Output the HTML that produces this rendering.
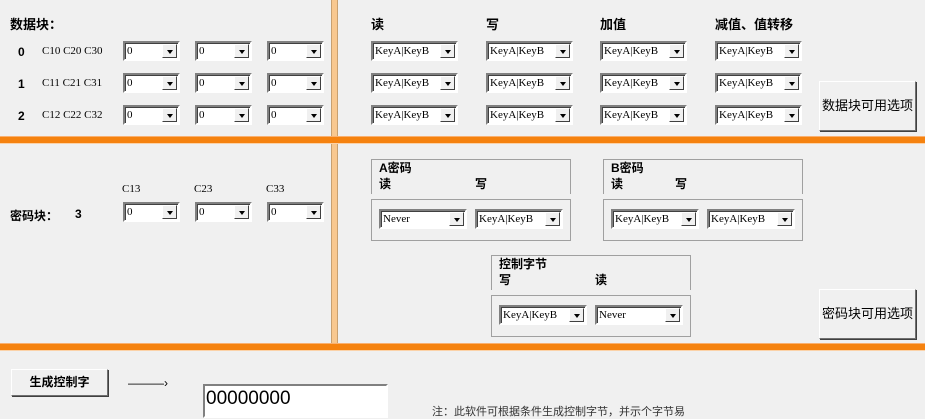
<!DOCTYPE html><html><head><meta charset="utf-8"><style>
body{margin:0;width:925px;height:409px;background:#f0f0f0;position:relative;overflow:hidden;font-family:"Liberation Sans","Noto Sans CJK SC",sans-serif;font-size:12px;color:#000}
.a{position:absolute;white-space:nowrap}
.b{font-weight:bold}
.s{position:absolute;height:16px;background:#fff;border:2px solid;border-color:#808080 #fff #fff #808080;box-shadow:inset 1px 1px 0 #404040;font-family:"Liberation Serif",serif;font-size:11px;line-height:16px;padding-left:2px;box-sizing:content-box}
.s i{position:absolute;right:1px;top:1px;width:15px;height:14px;background:#f0f0f0;border:1px solid;border-color:#fff #404040 #404040 #fff;box-sizing:border-box}
.s i:after{content:"";position:absolute;left:4px;top:5px;border:3px solid transparent;border-top:4px solid #000;border-bottom:0}
.bar{position:absolute;left:0;width:925px;height:6px;background:#f5820f;border-top:1px solid #f9b070;border-bottom:1px solid #fbd2a8}
.g{position:absolute;border:1px solid #a0a0a0}
.btn{position:absolute;background:#f0f0f0;border:1px solid;border-color:#fff #707070 #707070 #fff;box-shadow:1px 1px 0 #404040;text-align:center;font-size:13px}
</style></head><body>
<div class="a" style="left:331px;top:0;width:5px;height:346px;background:#f8c890;border-left:1px solid #c8a070;border-right:1px solid #c8a070"></div>
<div class="bar" style="top:136px"></div>
<div class="bar" style="top:343px"></div>

<div class="a b" style="left:10px;top:14px;font-size:13px">数据块：</div>
<div class="a b" style="left:371px;top:14px;font-size:13px">读</div>
<div class="a b" style="left:486px;top:14px;font-size:13px">写</div>
<div class="a b" style="left:600px;top:14px;font-size:13px">加值</div>
<div class="a b" style="left:715px;top:14px;font-size:13px">减值、值转移</div>

<div class="a b" style="left:18px;top:45px">0</div><div class="a" style="left:42px;top:45px;font-family:'Liberation Serif',serif;font-size:11px">C10 C20 C30</div>
<div class="a b" style="left:18px;top:77px">1</div><div class="a" style="left:42px;top:77px;font-family:'Liberation Serif',serif;font-size:11px">C11 C21 C31</div>
<div class="a b" style="left:18px;top:109px">2</div><div class="a" style="left:42px;top:109px;font-family:'Liberation Serif',serif;font-size:11px">C12 C22 C32</div>

<div class="s" style="left:123px;top:41px;width:51px">0<i></i></div><div class="s" style="left:195px;top:41px;width:51px">0<i></i></div><div class="s" style="left:267px;top:41px;width:51px">0<i></i></div>
<div class="s" style="left:123px;top:73px;width:51px">0<i></i></div><div class="s" style="left:195px;top:73px;width:51px">0<i></i></div><div class="s" style="left:267px;top:73px;width:51px">0<i></i></div>
<div class="s" style="left:123px;top:105px;width:51px">0<i></i></div><div class="s" style="left:195px;top:105px;width:51px">0<i></i></div><div class="s" style="left:267px;top:105px;width:51px">0<i></i></div>

<div class="s" style="left:371px;top:41px;width:81px">KeyA|KeyB<i></i></div><div class="s" style="left:486px;top:41px;width:81px">KeyA|KeyB<i></i></div><div class="s" style="left:600px;top:41px;width:81px">KeyA|KeyB<i></i></div><div class="s" style="left:715px;top:41px;width:81px">KeyA|KeyB<i></i></div>
<div class="s" style="left:371px;top:73px;width:81px">KeyA|KeyB<i></i></div><div class="s" style="left:486px;top:73px;width:81px">KeyA|KeyB<i></i></div><div class="s" style="left:600px;top:73px;width:81px">KeyA|KeyB<i></i></div><div class="s" style="left:715px;top:73px;width:81px">KeyA|KeyB<i></i></div>
<div class="s" style="left:371px;top:105px;width:81px">KeyA|KeyB<i></i></div><div class="s" style="left:486px;top:105px;width:81px">KeyA|KeyB<i></i></div><div class="s" style="left:600px;top:105px;width:81px">KeyA|KeyB<i></i></div><div class="s" style="left:715px;top:105px;width:81px">KeyA|KeyB<i></i></div>

<div class="btn" style="left:819px;top:81px;width:95px;height:48px;line-height:48px">数据块可用选项</div>

<div class="a b" style="left:10px;top:207px">密码块：</div><div class="a b" style="left:75px;top:207px">3</div>
<div class="a" style="left:122px;top:183px;font-family:'Liberation Serif',serif;font-size:11px">C13</div>
<div class="a" style="left:194px;top:183px;font-family:'Liberation Serif',serif;font-size:11px">C23</div>
<div class="a" style="left:266px;top:183px;font-family:'Liberation Serif',serif;font-size:11px">C33</div>
<div class="s" style="left:123px;top:202px;width:51px">0<i></i></div><div class="s" style="left:195px;top:202px;width:51px">0<i></i></div><div class="s" style="left:267px;top:202px;width:51px">0<i></i></div>

<div class="g" style="left:371px;top:159px;width:198px;height:34px;border-bottom:0"></div>
<div class="a b" style="left:379px;top:159px">A密码</div><div class="a b" style="left:379px;top:175px">读</div><div class="a b" style="left:475px;top:175px">写</div>
<div class="g" style="left:371px;top:199px;width:198px;height:40px"></div>
<div class="s" style="left:379px;top:209px;width:82px">Never<i></i></div><div class="s" style="left:475px;top:209px;width:82px">KeyA|KeyB<i></i></div>

<div class="g" style="left:603px;top:159px;width:198px;height:34px;border-bottom:0"></div>
<div class="a b" style="left:611px;top:159px">B密码</div><div class="a b" style="left:611px;top:175px">读</div><div class="a b" style="left:675px;top:175px">写</div>
<div class="g" style="left:603px;top:199px;width:198px;height:40px"></div>
<div class="s" style="left:611px;top:209px;width:82px">KeyA|KeyB<i></i></div><div class="s" style="left:707px;top:209px;width:82px">KeyA|KeyB<i></i></div>

<div class="g" style="left:491px;top:255px;width:198px;height:34px;border-bottom:0"></div>
<div class="a b" style="left:499px;top:255px">控制字节</div><div class="a b" style="left:499px;top:271px">写</div><div class="a b" style="left:595px;top:271px">读</div>
<div class="g" style="left:491px;top:295px;width:198px;height:40px"></div>
<div class="s" style="left:499px;top:305px;width:82px">KeyA|KeyB<i></i></div><div class="s" style="left:595px;top:305px;width:82px">Never<i></i></div>

<div class="btn" style="left:819px;top:289px;width:95px;height:48px;line-height:48px">密码块可用选项</div>

<div class="btn b" style="left:11px;top:369px;width:95px;height:25px;line-height:25px;font-size:12px">生成控制字</div>
<div class="a" style="left:128px;top:376px;font-size:12px">———›</div>
<div class="a" style="left:203px;top:384px;width:180px;height:30px;background:#fff;border:2px solid;border-color:#808080 #fff #fff #808080;font-size:19px;line-height:26px;padding-left:1px">00000000</div>
<div class="a" style="left:432px;top:403px;font-size:11px;color:#333">注：此软件可根据条件生成控制字节，并示个字节易</div>
</body></html>
